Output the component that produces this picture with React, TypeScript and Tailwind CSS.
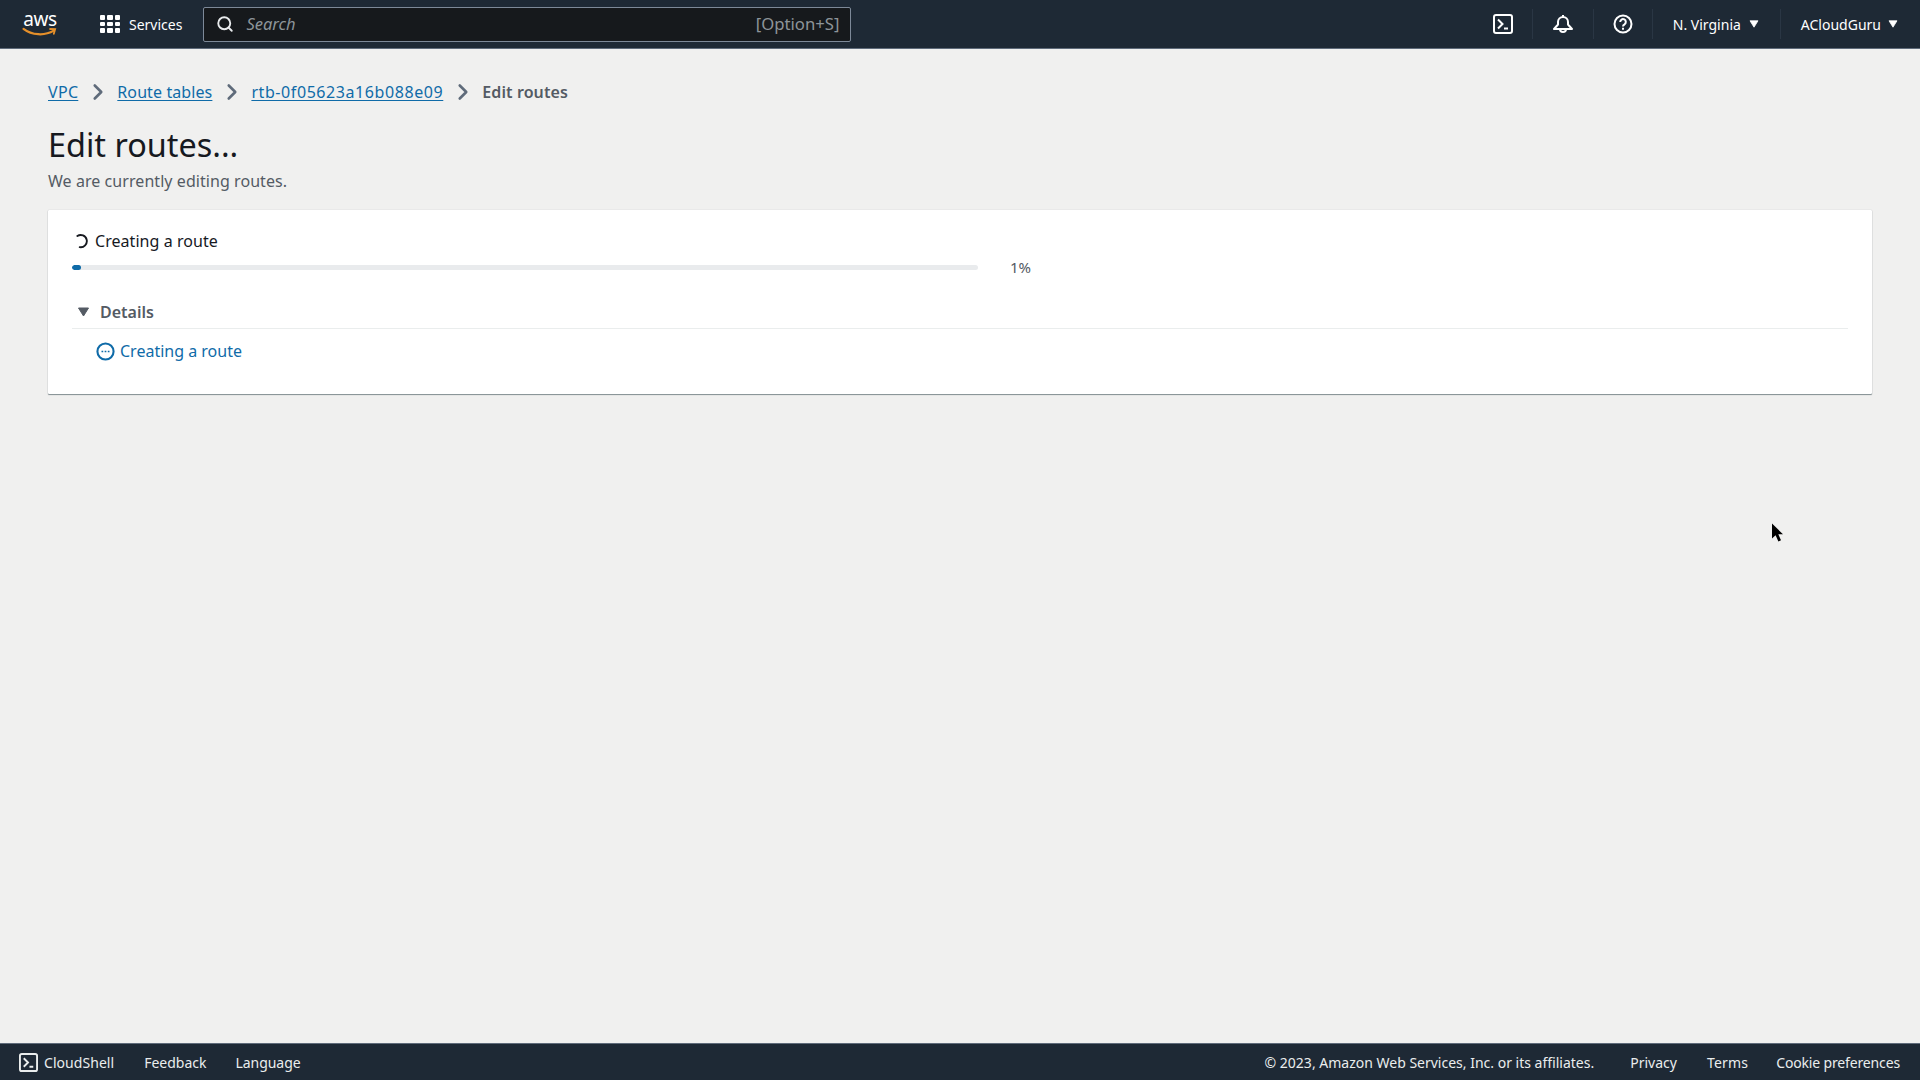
import { ChevronRight, Search } from "lucide-react";

const FONT = "font-['Noto_Sans',sans-serif]";

function Caret({ className }: { className?: string }) {
  return (
    <svg viewBox="0 0 12 10" className={className} fill="currentColor">
      <path d="M1 1h10L6 9z" stroke="currentColor" strokeWidth="1" strokeLinejoin="round" />
    </svg>
  );
}

function ShellIcon({ className }: { className?: string }) {
  return (
    <svg viewBox="0 0 20 20" className={className} fill="none" stroke="currentColor" strokeWidth="2">
      <rect x="1" y="1" width="18" height="18" rx="2" />
      <path d="M5 5.5l4.5 4.5L5 14.5M11 14.5h4" />
    </svg>
  );
}

function Divider() {
  return <div className="h-[30px] w-px bg-[#2a3644]" />;
}

function AwsLogo() {
  return (
    <div className="flex flex-col items-center leading-none">
      <span className="text-[19px] leading-[17px] tracking-[-0.4px] text-white">aws</span>
      <svg viewBox="0 0 40 12" className="mt-[-1px] h-[11px] w-[38px]" fill="none" stroke="#e58f2a" strokeWidth="2.4" strokeLinecap="round">
        <path d="M2 2c9 7 23 8 33 2" />
        <path d="M31 2.2l5.5.2-1.4 5" strokeWidth="2" />
      </svg>
    </div>
  );
}

function TopBar() {
  return (
    <header className="flex h-[49px] shrink-0 items-center border-b border-[#5f6b7a] bg-[#1e2935] text-white">
      <div className="flex w-[80px] shrink-0 flex-col items-center">
        <AwsLogo />
      </div>
      <div className="ml-[20px] grid h-[18px] w-[20px] grid-cols-3 gap-[2px]">
        {[0, 1, 2, 3, 4, 5, 6, 7, 8].map((i) => (
          <span key={i} className="rounded-[1px] bg-white" />
        ))}
      </div>
      <span className="ml-[9px] text-[14px]">Services</span>
      <div className="ml-[21px] flex h-[35px] w-[648px] items-center rounded-[2px] border border-[#7d8998] bg-[#16191c] pl-[12px] pr-[11px]">
        <Search size={18} strokeWidth={2.5} className="text-[#e9ebed]" />
        <span className="ml-[12px] text-[16.5px] italic text-[#8d9499]">Search</span>
        <span className="ml-auto text-[16.7px] text-[#8d9499]">[Option+S]</span>
      </div>
      <div className="ml-auto flex items-center">
        <ShellIcon className="h-[20px] w-[20px]" />
        <div className="ml-[19px]"><Divider /></div>
        <svg viewBox="0 0 20 20" className="ml-[20px] h-[20px] w-[20px]" fill="none" stroke="currentColor" strokeWidth="2" strokeLinejoin="round">
          <path d="M1 15h18l-4-4.5V8a5 5 0 0 0-10 0v2.5z" />
          <path d="M10 1v2M7 15a3 3 0 0 0 6 0" />
        </svg>
        <div className="ml-[20px]"><Divider /></div>
        <svg viewBox="0 0 20 20" className="ml-[19px] h-[20px] w-[20px]" fill="none" stroke="currentColor" strokeWidth="2">
          <circle cx="10" cy="10" r="8.5" />
          <path d="M7.2 8a2.8 2.8 0 1 1 4.3 2.3c-1 .6-1.5 1.1-1.5 2.2M10 13.8v2" />
        </svg>
        <div className="ml-[19px]"><Divider /></div>
        <span className="ml-[20px] text-[14px]">N. Virginia</span>
        <Caret className="ml-[8px] h-[8px] w-[10px]" />
        <div className="ml-[21px]"><Divider /></div>
        <span className="ml-[20px] text-[14px]">ACloudGuru</span>
        <Caret className="ml-[7px] h-[8px] w-[10px]" />
        <div className="relative w-[22px] self-stretch">
          <span className="absolute right-[5px] top-[-20px] h-[8px] w-[8px] rounded-full bg-[#ce8237]" />
        </div>
      </div>
    </header>
  );
}

function Breadcrumbs() {
  const sep = <ChevronRight size={26} strokeWidth={2.4} className="mx-[6.5px] text-[#5f6b7a]" />;
  const link = "text-[#0f6ba8] underline underline-offset-2";
  return (
    <nav className="flex h-[24px] items-center text-[16px]">
      <a className={`${link} tracking-[0.3px]`}>VPC</a>
      {sep}
      <a className={`${link} tracking-[0.1px]`}>Route tables</a>
      {sep}
      <a className={`${link} tracking-[0.58px]`}>rtb-0f05623a16b088e09</a>
      {sep}
      <span className="font-semibold tracking-[0.1px] text-[#545b64]">Edit routes</span>
    </nav>
  );
}

function ProgressCard() {
  return (
    <section className="mt-[17px] flex h-[184px] flex-col rounded-[1px] bg-white px-[24px] pt-[19px] shadow-[0_1px_1px_0_rgba(0,28,36,0.45),0_0_1px_0_rgba(0,28,36,0.3)]">
      <div className="flex h-[24px] items-center text-[#16191f]">
        <svg viewBox="0 0 16 16" className="ml-[3px] h-[15px] w-[15px]" fill="none" stroke="currentColor" strokeWidth="2" strokeLinecap="round">
          <path d="M2.5 2.2A6.5 6.5 0 1 1 5 14" />
        </svg>
        <span className="ml-[5px] text-[16px] tracking-[0.05px]">Creating a route</span>
      </div>
      <div className="mt-[4px] flex h-[20px] items-center">
        <div className="h-[5px] w-[906px] overflow-hidden rounded-full bg-[#e9ebed]">
          <div className="h-full w-[9px] rounded-full bg-[#0f6ba8]" />
        </div>
        <span className="ml-[32px] text-[15px] text-[#545b64]">1%</span>
      </div>
      <div className="mt-[20px] flex h-[32px] items-center border-b border-[#eaeded] pb-[2px] text-[#545b64]">
        <Caret className="ml-[5px] h-[10px] w-[13px]" />
        <span className="ml-[10px] text-[16px] font-semibold">Details</span>
      </div>
      <div className="mt-[8px] flex h-[28px] items-center pl-[24px] text-[#0f6ba8]">
        <svg viewBox="0 0 20 20" className="h-[19px] w-[19px]" fill="none" stroke="currentColor" strokeWidth="2.2">
          <circle cx="10" cy="10" r="8.5" />
          <path d="M5.8 10h1.8M9.1 10h1.8M12.4 10h1.8" strokeWidth="1.8" />
        </svg>
        <span className="ml-[5px] text-[16px]">Creating a route</span>
      </div>
    </section>
  );
}

function Footer() {
  return (
    <footer className="flex h-[37px] shrink-0 items-center border-t border-[#5f6b7a] bg-[#1e2935] pl-[19px] pr-[20px] text-[14px] text-[#eaeded]">
      <ShellIcon className="h-[19px] w-[19px]" />
      <span className="ml-[6px] tracking-[0.05px]">CloudShell</span>
      <span className="ml-[30px]">Feedback</span>
      <span className="ml-[29px] tracking-[-0.05px]">Language</span>
      <span className="ml-auto">© 2023, Amazon Web Services, Inc. or its affiliates.</span>
      <span className="ml-[36px]">Privacy</span>
      <span className="ml-[30px] tracking-[0.2px]">Terms</span>
      <span className="ml-[28px] tracking-[-0.15px]">Cookie preferences</span>
    </footer>
  );
}

export default function App() {
  return (
    <div className={`${FONT} relative flex h-[1080px] w-[1920px] flex-col overflow-hidden bg-[#f0f0ef]`}>
      <TopBar />
      <main className="flex-1 px-[48px] pt-[31px]">
        <Breadcrumbs />
        <h1 className="mt-[18px] text-[32.4px] leading-[44px] text-[#16191f]">Edit routes...</h1>
        <p className="mt-[3px] text-[16px] leading-[24px] tracking-[0.06px] text-[#545b64]">We are currently editing routes.</p>
        <ProgressCard />
      </main>
      <Footer />
      {/* mouse pointer caught in the capture */}
      <svg viewBox="0 0 14 20" className="absolute left-[1771px] top-[522px] h-[21px] w-[14px]" fill="#000">
        <path d="M1 1v15l3.6-3.3L7.4 19l2.6-1.2-2.7-6H12z" />
      </svg>
    </div>
  );
}
